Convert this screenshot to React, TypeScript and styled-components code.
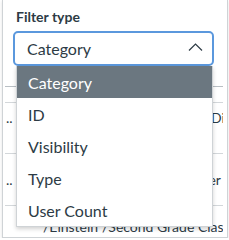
import styled, { createGlobalStyle } from 'styled-components';

const GlobalStyle = createGlobalStyle`
  html, body {
    margin: 0;
    padding: 0;
    background: #ffffff;
  }
  body {
    font-family: Lato, "Open Sans", "Liberation Sans", sans-serif;
    color: #2d3b45;
  }
`;

const Page = styled.div`
  padding: 0 1px 0 2px;
`;

const Frame = styled.div`
  position: relative;
  height: 237px;
  border: 1px solid #cfd3d6;
  border-top: none;
  box-shadow: 0 1px 3px rgba(0, 0, 0, 0.12);
  overflow: hidden;
  background: #ffffff;
`;

const Field = styled.div`
  display: flex;
  flex-direction: column;
  gap: 6px;
  padding: 8px 13px 0 10px;
`;

const Label = styled.label`
  padding-left: 3px;
  font-size: 14px;
  font-weight: 700;
  line-height: 17px;
  color: #2d3b45;
`;

const SelectWrap = styled.div`
  position: relative;
`;

const Control = styled.div`
  box-sizing: border-box;
  height: 35px;
  display: flex;
  align-items: center;
  justify-content: space-between;
  padding: 0 9px 0 12px;
  border: 2px solid #5b98dd;
  border-radius: 5px;
  font-size: 16px;
  line-height: 19px;
  color: #2d3b45;
`;

const Chevron = styled.svg`
  width: 15px;
  height: 8px;
  margin-top: -3px;
`;

const Menu = styled.ul`
  position: absolute;
  top: 100%;
  left: 3px;
  right: 1px;
  z-index: 2;
  margin: 0;
  padding: 0;
  list-style: none;
  background: #ffffff;
  border: 1px solid #cfd3d6;
  border-top: none;
  box-shadow: 0 2px 4px rgba(0, 0, 0, 0.18);
`;

const Option = styled.li<{ $active?: boolean }>`
  height: 32px;
  display: flex;
  align-items: center;
  padding-left: 11px;
  font-size: 16px;
  color: ${(p) => (p.$active ? '#ffffff' : '#2d3b45')};
  background: ${(p) => (p.$active ? '#6b7780' : 'transparent')};
`;

const Table = styled.div`
  margin: 0 4px 0 2px;
  overflow: hidden;
`;

const Row = styled.div<{ $h: number; $pad?: number; $dark?: boolean }>`
  position: relative;
  box-sizing: border-box;
  height: ${(p) => p.$h}px;
  padding-top: ${(p) => p.$pad ?? 0}px;
  border-bottom: 1px solid ${(p) => (p.$dark ? '#b9bfc4' : '#d3d7da')};
  display: flex;
  align-items: flex-start;
  font-size: 14px;
  line-height: 17px;
  white-space: nowrap;
`;

const LastRow = styled(Row)`
  border-bottom: none;
`;

const Cell = styled.div<{ $w: number; $indent?: number }>`
  flex: 0 0 ${(p) => p.$w}px;
  padding-left: ${(p) => p.$indent ?? 0}px;
  box-sizing: border-box;
  overflow: hidden;
`;

const options = ['Category', 'ID', 'Visibility', 'Type', 'User Count'];

export default function App() {
  return (
    <Page>
      <GlobalStyle />
      <Frame>
        <Field>
          <Label>Filter type</Label>
          <SelectWrap>
            <Control>
              <span>Category</span>
              <Chevron viewBox="0 0 15 8" fill="none">
                <polyline points="1,7.5 7.5,1 14,7.5" stroke="#2d3b45" strokeWidth="1.2" />
              </Chevron>
            </Control>
            <Menu>
              {options.map((o, i) => (
                <Option key={`opt-${o}`} $active={i === 0}>{o}</Option>
              ))}
            </Menu>
          </SelectWrap>
        </Field>
        <Table>
          <Row $h={21} $dark />
          <Row $h={16} />
          <Row $h={51} $pad={6}>
            <Cell $w={40} $indent={1}>..</Cell>
            <Cell $w={166}></Cell>
            <Cell $w={30}>Discussion</Cell>
          </Row>
          <Row $h={52} $pad={17}>
            <Cell $w={40} $indent={1}>..</Cell>
            <Cell $w={128}></Cell>
            <Cell $w={60}>Teacher</Cell>
          </Row>
          <LastRow $h={40} $pad={12}>
            <Cell $w={38}></Cell>
            <Cell $w={59}>/Einstein</Cell>
            <Cell $w={130}>/Second Grade Class</Cell>
          </LastRow>
        </Table>
      </Frame>
    </Page>
  );
}
